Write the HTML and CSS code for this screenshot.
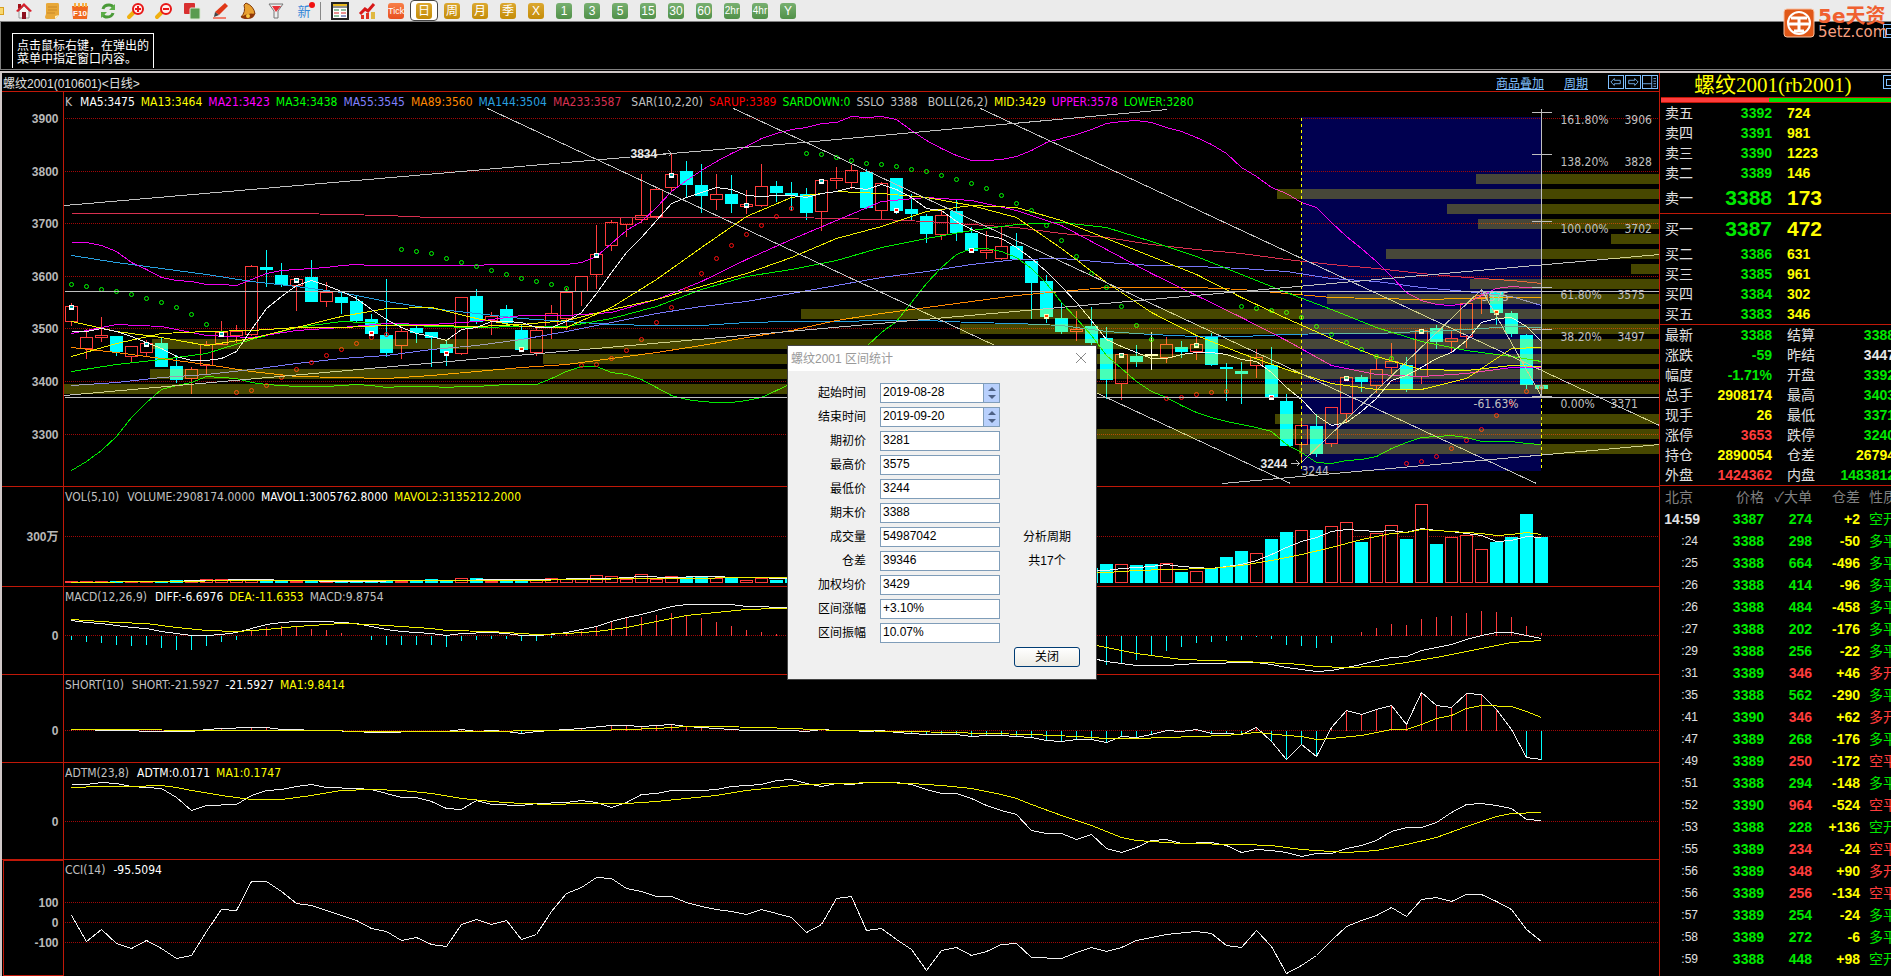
FILE: index.html
```html
<!DOCTYPE html>
<html lang="zh-CN">

<head>
    <meta charset="UTF-8">
    <meta name="viewport" content="width=device-width, initial-scale=1.0">
    <title>螺纹2001 日线</title>
    <link rel="stylesheet" href="styles.css">
</head>

<body>

    <div class="toolbar">
        <span class="cut"></span>
        <button class="tool" title="首页"><svg viewBox="0 0 16 16"><path d="M3 8v7h10V8L8 3z" fill="#f4f4f4" stroke="#999"/><path d="M0 8L8 0l8 8-2 1-6-6-6 6z" fill="#d8202c"/><path d="M2 1h3v3L2 6z" fill="#a01018"/><path d="M6 9h4v7H6z" fill="#8c1020"/></svg></button>
        <button class="tool" title="公告"><svg viewBox="0 0 16 16"><path d="M2 1q0-1 2-1h10q1 0 1 2v10l-4 4H3q-2 0-2-2l1-3z" fill="#e8a838"/><path d="M4 4h9M4 7h9M3 10h8" stroke="#c88828"/><path d="M11 16v-3l4-1z" fill="#fff0c0"/></svg></button>
        <button class="tool" title="F10"><svg viewBox="0 0 16 16"><path d="M0 3h16l-1 13H1z" fill="#f06820"/><path d="M3 0v4M7 0v4M11 0v4M14 0v4" stroke="#f8b040" stroke-width="2"/><text x="8" y="13" font-size="8" font-weight="bold" text-anchor="middle" fill="#fff">F10</text></svg></button>
        <button class="tool" title="刷新"><svg viewBox="0 0 16 16"><path d="M3 6q1-4 6-4 3 0 4 2M13 10q-1 4-6 4-3 0-4-2" fill="none" stroke="#4a9a38" stroke-width="3"/><path d="M15 1v6H9zM1 15V9h6z" fill="#5cae48"/></svg></button>
        <button class="tool" title="放大"><svg viewBox="0 0 16 16"><path d="M6 9l-5 5" stroke="#f0b010" stroke-width="4" stroke-linecap="round"/><circle cx="10" cy="6" r="5" fill="#fff0f0" stroke="#e81818" stroke-width="2"/><path d="M7 6h6M10 3v6" stroke="#e81818" stroke-width="2"/></svg></button>
        <button class="tool" title="缩小"><svg viewBox="0 0 16 16"><path d="M6 9l-5 5" stroke="#f0b010" stroke-width="4" stroke-linecap="round"/><circle cx="10" cy="6" r="5" fill="#fff0f0" stroke="#e81818" stroke-width="2"/><path d="M7 6h6" stroke="#e81818" stroke-width="2"/></svg></button>
        <button class="tool" title="叠加"><svg viewBox="0 0 16 16"><rect width="11" height="11" rx="1" fill="#d83030"/><rect x="6" y="5" width="10" height="11" rx="1" fill="#5a9c50" stroke="#d8e8d0"/></svg></button>
        <button class="tool" title="画线"><svg viewBox="0 0 16 16"><path d="M13 0l3 3-9 9-4-3z" fill="#e03818"/><path d="M3 9l4 3-5 2z" fill="#444"/><path d="M1 15h13" stroke="#f08070" stroke-width="2"/></svg></button>
        <button class="tool" title="预警"><svg viewBox="0 0 16 16"><path d="M6 0q8 3 9 11L1 14Q6 9 4 2z" fill="#e8a030" stroke="#803808"/><path d="M1 14q7-5 14-3-1 5-8 5-5 0-6-2z" fill="#903808"/><circle cx="8" cy="13" r="2" fill="#f8c840"/></svg></button>
        <button class="tool" title="筛选"><svg viewBox="0 0 16 16"><path d="M1 1h14l-5 7v7H6V8z" fill="#eee" stroke="#777"/><path d="M4 3h9L8 9z" fill="#e83038"/></svg></button>
        <button class="tool new" title="新">新<i></i></button>
        <span class="sep"></span>
        <button class="tool" title="报价"><svg viewBox="0 0 16 16"><rect x="0" y="0" width="16" height="16" fill="#fff" stroke="#222" stroke-width="2"/><path d="M1 2h14" stroke="#e8b820" stroke-width="2"/><path d="M0 4h16" stroke="#222"/><path d="M2 7h5M2 13h5M9 7h5" stroke="#208040"/><path d="M2 10h5M9 10h5" stroke="#d02020"/><path d="M9 13h5" stroke="#203890"/></svg></button>
        <button class="tool" title="走势"><svg viewBox="0 0 16 16"><path d="M1 16v-4h3v4zM6 16v-6h3v6z" fill="#e03020"/><path d="M11 16V9h4v7z" fill="#e0b840"/><path d="M0 11l5-5 3 2 6-7" fill="none" stroke="#d81818" stroke-width="3"/></svg></button>
        <button class="tool"><b class="tick">Tick</b></button>
        <button class="tool on"><b class="gold">日</b></button>
        <button class="tool"><b class="gold">周</b></button>
        <button class="tool"><b class="gold">月</b></button>
        <button class="tool"><b class="gold">季</b></button>
        <button class="tool"><b class="gold">X</b></button>
        <button class="tool"><b class="green">1</b></button>
        <button class="tool"><b class="green">3</b></button>
        <button class="tool"><b class="green">5</b></button>
        <button class="tool"><b class="green">15</b></button>
        <button class="tool"><b class="green">30</b></button>
        <button class="tool"><b class="green">60</b></button>
        <button class="tool"><b class="green small">2hr</b></button>
        <button class="tool"><b class="green small">4hr</b></button>
        <button class="tool"><b class="green">Y</b></button>
    </div>

    <div class="hint-bar">
        <p class="hint">点击鼠标右键，在弹出的<br>菜单中指定窗口内容。</p>
        <button class="corner" title="菜单"></button>
    </div>

    <div class="brand">
        <svg class="brand-mark" viewBox="0 0 32 30"><rect x="1" y="1" width="30" height="28" rx="3" fill="#e05818" stroke="#f8c0a0"/><circle cx="16" cy="15" r="11" fill="none" stroke="#fff" stroke-width="2"/><path d="M8 10h16M5 16h22M16 10v14M11 23h10" stroke="#fff" stroke-width="3" fill="none"/></svg>
        <div class="brand-text">
            <span class="brand-name">5e天资</span>
            <span class="brand-url">5etz.com</span>
        </div>
    </div>

    <div class="main">
        <div class="charts">
            <div class="chart-head">
                <span class="chart-title">螺纹2001(010601)&lt;日线&gt;</span>
                <a href="#">商品叠加</a>
                <a href="#">周期</a>
                <span class="boxes">
                    <button title="前移"><svg viewBox="0 0 16 14"><path d="M2 7l4-4v2h7v4H6v2z"/></svg></button>
                    <button title="后移"><svg viewBox="0 0 16 14"><path d="M14 7l-4-4v2H3v4h7v2z"/></svg></button>
                    <button title="布局"><svg viewBox="0 0 16 14"><path d="M10 0v14M0 9h10M12 3h3M12 6h3M12 9h3M12 12h3"/></svg></button>
                </span>
            </div>

            <div class="pane">
                <svg id="kline" viewBox="2 2 1657 394" preserveAspectRatio="xMinYMin meet"></svg>
                <div class="legend kline-legend">
                    <span>K</span>
                    <span class="white">MA5:3475</span>
                    <span class="yellow">MA13:3464</span>
                    <span class="magenta">MA21:3423</span>
                    <span class="lime">MA34:3438</span>
                    <span class="violet">MA55:3545</span>
                    <span class="orange">MA89:3560</span>
                    <span class="blue">MA144:3504</span>
                    <span class="crimson">MA233:3587</span>
                    <span class="group">SAR(10,2,20)</span>
                    <span class="red">SARUP:3389</span>
                    <span class="lime">SARDOWN:0</span>
                    <span>SSLO</span>
                    <span>3388</span>
                    <span class="group">BOLL(26,2)</span>
                    <span class="yellow">MID:3429</span>
                    <span class="magenta">UPPER:3578</span>
                    <span class="lime">LOWER:3280</span>
                </div>
            </div>

            <div class="pane">
                <svg id="vol" viewBox="2 7 1657 99" preserveAspectRatio="xMinYMin meet"></svg>
                <div class="legend">
                    <span>VOL(5,10)</span>
                    <span>VOLUME:2908174.0000</span>
                    <span class="white">MAVOL1:3005762.8000</span>
                    <span class="yellow">MAVOL2:3135212.2000</span>
                </div>
            </div>

            <div class="pane">
                <svg id="macd" viewBox="2 107 1657 87" preserveAspectRatio="xMinYMin meet"></svg>
                <div class="legend">
                    <span>MACD(12,26,9)</span>
                    <span class="white">DIFF:-6.6976</span>
                    <span class="yellow">DEA:-11.6353</span>
                    <span>MACD:9.8754</span>
                </div>
            </div>

            <div class="pane">
                <svg id="short" viewBox="2 195 1657 87" preserveAspectRatio="xMinYMin meet"></svg>
                <div class="legend">
                    <span>SHORT(10)</span>
                    <span>SHORT:-21.5927</span>
                    <span class="white">-21.5927</span>
                    <span class="yellow">MA1:9.8414</span>
                </div>
            </div>

            <div class="pane">
                <svg id="adtm" viewBox="2 283 1657 96" preserveAspectRatio="xMinYMin meet"></svg>
                <div class="legend">
                    <span>ADTM(23,8)</span>
                    <span class="white">ADTM:0.0171</span>
                    <span class="yellow">MA1:0.1747</span>
                </div>
            </div>

            <div class="pane">
                <svg id="cci" viewBox="2 380 1657 116" preserveAspectRatio="xMinYMin meet"></svg>
                <div class="legend">
                    <span>CCI(14)</span>
                    <span class="white">-95.5094</span>
                </div>
            </div>
        </div>

        <div class="side">
            <div class="side-head">
                <h1>螺纹2001(rb2001)</h1>
                <button class="corner" title="菜单"></button>
            </div>
            <div class="ratio"><i></i></div>

            <table class="book">
                <tr><th>卖五</th><td>3392</td><td>724</td></tr>
                <tr><th>卖四</th><td>3391</td><td>981</td></tr>
                <tr><th>卖三</th><td>3390</td><td>1223</td></tr>
                <tr><th>卖二</th><td>3389</td><td>146</td></tr>
                <tr class="big"><th>卖一</th><td>3388</td><td>173</td></tr>
            </table>
            <table class="book">
                <tr class="big"><th>买一</th><td>3387</td><td>472</td></tr>
                <tr><th>买二</th><td>3386</td><td>631</td></tr>
                <tr><th>买三</th><td>3385</td><td>961</td></tr>
                <tr><th>买四</th><td>3384</td><td>302</td></tr>
                <tr><th>买五</th><td>3383</td><td>346</td></tr>
            </table>

            <table class="info">
                <tr><th>最新</th><td>3388</td><th>结算</th><td>3388</td></tr>
                <tr><th>涨跌</th><td>-59</td><th>昨结</th><td class="pale">3447</td></tr>
                <tr><th>幅度</th><td>-1.71%</td><th>开盘</th><td>3392</td></tr>
                <tr><th>总手</th><td class="yellow">2908174</td><th>最高</th><td>3403</td></tr>
                <tr><th>现手</th><td class="yellow">26</td><th>最低</th><td>3371</td></tr>
                <tr><th>涨停</th><td class="up">3653</td><th>跌停</th><td>3240</td></tr>
                <tr><th>持仓</th><td class="yellow">2890054</td><th>仓差</th><td class="yellow">26794</td></tr>
                <tr><th>外盘</th><td class="up">1424362</td><th>内盘</th><td>1483812</td></tr>
            </table>

            <table class="ticks" id="ticks">
                <tr><th>北京</th><th>价格</th><th>✓大单</th><th>仓差</th><th>性质</th></tr>
            </table>
        </div>
    </div>

    <form class="dialog">
        <div class="dialog-title">
            <span>螺纹2001 区间统计</span>
            <button type="button" class="close" title="关闭"><svg viewBox="0 0 10 10"><path d="M0 0l10 10M10 0L0 10"/></svg></button>
        </div>
        <div class="dialog-body">
            <label for="from">起始时间</label>
            <div class="date">
                <input id="from" type="text" value="2019-08-28">
                <div class="spin"><button type="button" class="inc" title="加"></button><button type="button" class="dec" title="减"></button></div>
            </div>
            <label for="to">结束时间</label>
            <div class="date">
                <input id="to" type="text" value="2019-09-20">
                <div class="spin"><button type="button" class="inc" title="加"></button><button type="button" class="dec" title="减"></button></div>
            </div>
            <label for="open">期初价</label><input id="open" type="text" value="3281">
            <label for="high">最高价</label><input id="high" type="text" value="3575">
            <label for="low">最低价</label><input id="low" type="text" value="3244">
            <label for="last">期末价</label><input id="last" type="text" value="3388">
            <label for="volume">成交量</label><input id="volume" type="text" value="54987042">
            <span class="note">分析周期</span>
            <label for="diff">仓差</label><input id="diff" type="text" value="39346">
            <span class="note">共17个</span>
            <label for="avg">加权均价</label><input id="avg" type="text" value="3429">
            <label for="rise">区间涨幅</label><input id="rise" type="text" value="+3.10%">
            <label for="swing">区间振幅</label><input id="swing" type="text" value="10.07%">
            <button type="button" class="ok">关闭</button>
        </div>
    </form>

    <script src="chart.js"></script>
</body>

</html>
```

FILE: styles.css
```css
* {
    box-sizing: border-box;
}

body {
    margin: 0;
    height: 100vh;
    display: flex;
    flex-direction: column;
    overflow: hidden;
    position: relative;
    background: #000;
    color: #c0c0c0;
    font-family: "Liberation Sans", "Noto Sans CJK SC", sans-serif;
    font-size: 12px;
}

button {
    padding: 0;
    border: none;
    background: none;
    font-family: inherit;
    cursor: pointer;
}

/* 工具栏 */
.toolbar {
    flex: none;
    display: flex;
    align-items: center;
    height: 22px;
    background: #ebebeb;
    border-bottom: 1px solid #808080;
}

.cut {
    width: 4px;
    height: 8px;
    margin-right: 6px;
    background: #f8d870;
    border: 1px solid #d8a020;
    border-left: none;
}

.tool {
    flex: none;
    display: flex;
    align-items: center;
    justify-content: center;
    width: 28px;
    height: 21px;
    overflow: visible;
}

.tool svg {
    width: 16px;
    height: 16px;
    overflow: visible;
}

.tool b {
    width: 16px;
    height: 16px;
    line-height: 16px;
    border-radius: 3px;
    color: #fff;
    font-size: 12px;
    font-weight: normal;
    text-align: center;
    white-space: nowrap;
}

.tool .gold {
    background: linear-gradient(#dca830, #c48c08);
}

.tool .green {
    background: linear-gradient(#78b070, #509048);
}

.tool .tick {
    background: linear-gradient(#f88048, #e85020);
    font-size: 9px;
}

.tool .small {
    font-size: 10px;
}

.tool.on {
    background: #fff;
    border: 1px solid #444;
    border-radius: 4px;
}

.new {
    position: relative;
    color: #3888d8;
    font-size: 13px;
}

.new i {
    position: absolute;
    top: 2px;
    right: 3px;
    width: 6px;
    height: 6px;
    border-radius: 50%;
    background: #f01010;
}

.sep {
    width: 2px;
    height: 18px;
    margin: 0 4px 0 2px;
    border-left: 1px solid #888;
}

.hint-bar {
    flex: none;
    display: flex;
    justify-content: space-between;
    height: 48px;
    border-left: 1px solid #808080;
    border-bottom: 1px solid #808080;
}

.hint {
    width: 142px;
    height: 35px;
    margin: 11px 0 0 11px;
    padding: 6px 4px 0;
    border: 1px solid #fff;
    border-bottom: none;
    color: #fff;
    line-height: 13px;
    white-space: nowrap;
}

/* 窗格右上角的小方块 */
.corner {
    width: 8px;
    height: 14px;
    margin-top: 2px;
    border: 1px solid #80c0ff;
    border-right: none;
    background: linear-gradient(#80c0ff, #80c0ff) 3px 3px / 8px 1px no-repeat,
        linear-gradient(#80c0ff, #80c0ff) 3px 9px / 8px 1px no-repeat,
        linear-gradient(#80c0ff, #80c0ff) 2px 3px / 1px 7px no-repeat;
}

/* 右上角标志，盖在工具栏上 */
.brand {
    position: absolute;
    top: 8px;
    right: 4px;
    display: flex;
    gap: 3px;
}

.brand-mark {
    width: 32px;
    height: 30px;
}

.brand-text {
    display: flex;
    flex-direction: column;
    width: 69px;
    color: #f06030;
    font-family: "DejaVu Sans", "Noto Sans CJK SC", sans-serif;
    white-space: nowrap;
}

.brand-name {
    font-size: 20px;
    font-weight: bold;
    line-height: 17px;
}

.brand-url {
    color: #f8a080;
    font-size: 15px;
    line-height: 14px;
}

/* 主区域 */
.main {
    flex: 1;
    display: flex;
    min-height: 0;
    margin-top: 1px;
    border-top: 2px solid #d0c8c8;
    border-left: 2px solid #d0c8c8;
}

.charts {
    flex: 1;
    min-width: 0;
    display: grid;
    grid-template-rows: 19px 395fr 100fr 88fr 88fr 97fr 116fr;
}

.chart-head {
    display: flex;
    align-items: center;
    gap: 20px;
    padding-left: 1px;
    border-bottom: 1px solid #c01808;
}

.chart-title {
    flex: 1;
    color: #e0e0e0;
}

.chart-head a {
    color: #80c0ff;
}

.boxes {
    display: flex;
    gap: 1px;
    padding-right: 1px;
}

.boxes button {
    width: 16px;
    height: 14px;
    border: 1px solid #80c0ff;
}

.boxes svg {
    display: block;
    width: 100%;
    height: 100%;
    fill: none;
    stroke: #80c0ff;
}

.pane {
    position: relative;
    min-height: 0;
    overflow: hidden;
    border-bottom: 1px solid #c01808;
}

.pane:last-child {
    border-bottom: none;
}

.pane svg {
    display: block;
    width: 100%;
    height: 100%;
}

.legend {
    position: absolute;
    top: 2px;
    left: 63px;
    display: flex;
    gap: 6px;
    line-height: 16px;
    white-space: nowrap;
    font-family: "DejaVu Sans Condensed", "DejaVu Sans", sans-serif;
}

.legend span:first-child {
    margin-right: 2px;
}

.kline-legend .group {
    margin-left: 4px;
}

.white { color: #fff; }
.yellow { color: #ff0; }
.magenta { color: #f0f; }
.lime { color: #0f0; }
.violet { color: #8080ff; }
.orange { color: #f80; }
.blue { color: #28a0e0; }
.crimson { color: #d83050; }
.red { color: #f00; }

/* 图形 */
.line {
    fill: none;
    stroke-width: 1;
}

.line,
.crisp,
.grid,
.draw {
    shape-rendering: crispEdges;
}

.grid {
    stroke: #a00808;
    stroke-dasharray: 1 1;
}

.frame {
    fill: none;
    stroke: #c01808;
}

.draw {
    fill: none;
    stroke: #c0c0c0;
}

.axis {
    fill: #b8b8b8;
    font-size: 12px;
    font-weight: bold;
    text-anchor: end;
}

.mark {
    fill: #c0c0c0;
    font-family: "DejaVu Sans Condensed", "DejaVu Sans", sans-serif;
    font-size: 12px;
}

.mark.strong {
    fill: #e8e8e8;
    font-weight: bold;
    font-family: "Liberation Sans", sans-serif;
}

/* 右侧行情 */
.side {
    flex: none;
    width: 232px;
    overflow: hidden;
    border-left: 1px solid #c01808;
}

.side-head {
    display: flex;
    justify-content: space-between;
    height: 24px;
    padding-left: 34px;
}

.side h1 {
    margin: 0;
    color: #ff0;
    font-family: "Liberation Serif", "Noto Sans CJK SC", serif;
    font-size: 21px;
    font-weight: normal;
    line-height: 24px;
    white-space: nowrap;
}

.ratio {
    height: 6px;
    margin-left: 1px;
    background: #00e000;
    border-top: 1px solid #c01808;
    border-bottom: 1px solid #c01808;
}

.ratio i {
    display: block;
    width: 47%;
    height: 4px;
    background: #ff3c3c;
}

.side table {
    width: 235px;
    table-layout: fixed;
    border-collapse: collapse;
    border-bottom: 1px solid #c01808;
}

.side th,
.side td {
    height: 20px;
    padding: 0;
    font-size: 14px;
    line-height: 20px;
    white-space: nowrap;
}

.side th {
    padding-left: 5px;
    color: #e0e0e0;
    font-weight: normal;
    text-align: left;
}

.side td {
    color: #00e800;
    font-weight: bold;
    text-align: right;
}

.side .yellow { color: #ff0; }
.side .up { color: #ff3c3c; }
.side .pale { color: #e8e8e8; }

.book th {
    width: 48px;
}

.book td:nth-child(2) {
    width: 64px;
}

.side .book td:last-child {
    padding-left: 15px;
    color: #ff0;
    text-align: left;
}

.side .big th,
.side .big td {
    height: 30px;
    line-height: 30px;
}

.side .big td {
    font-size: 21px;
}

.info th:first-child {
    width: 48px;
}

.info td:nth-child(2) {
    width: 64px;
}

.side .info th:nth-child(3) {
    width: 60px;
    padding-left: 15px;
}

.side .ticks {
    border: none;
}

.side .ticks th,
.side .ticks td {
    height: 22px;
    line-height: 22px;
}

.side .ticks th {
    padding: 0;
    color: #808080;
    text-align: right;
}

.side .ticks th:first-child {
    width: 40px;
    padding-left: 5px;
    text-align: left;
}

.ticks th:nth-child(2) { width: 64px; }
.ticks th:nth-child(3) { width: 48px; }
.ticks th:nth-child(4) { width: 48px; }

.side .ticks th:last-child,
.side .ticks td:last-child {
    padding-left: 9px;
    font-weight: normal;
    text-align: left;
}

.side .ticks td:first-child {
    padding-right: 2px;
    color: #e0e0e0;
    font-size: 12px;
    font-weight: normal;
}

.side .ticks tr:nth-child(2) td:first-child {
    padding-right: 0;
    font-size: 14px;
    font-weight: bold;
}

/* 区间统计窗口 */
.dialog {
    position: absolute;
    top: 346px;
    left: 788px;
    width: 308px;
    background: #f0f0f0;
    box-shadow: 0 0 0 1px #444;
    color: #000;
}

.dialog-title {
    display: flex;
    align-items: center;
    justify-content: space-between;
    height: 25px;
    padding: 0 10px 2px 3px;
    background: #fff;
    color: #999;
}

.close svg {
    display: block;
    width: 10px;
    height: 10px;
    overflow: visible;
    stroke: #888;
}

.dialog-body {
    display: grid;
    grid-template-columns: 78px 120px 1fr;
    grid-auto-rows: 20px;
    gap: 4px 14px;
    align-items: center;
    padding: 12px 16px 12px 0;
}

.dialog-body label {
    grid-column: 1;
    text-align: right;
    line-height: 18px;
}

.dialog-body > input,
.date {
    grid-column: 2;
}

.dialog-body input {
    width: 100%;
    height: 20px;
    padding: 0 2px 2px;
    border: 1px solid #7f9db9;
    background: #fff;
    color: #000;
    font-family: inherit;
    font-size: 12px;
}

.date {
    display: flex;
}

.date input {
    flex: 1;
    min-width: 0;
}

.spin {
    display: flex;
    flex-direction: column;
    justify-content: center;
    align-items: center;
    gap: 4px;
    width: 16px;
    background: #b8d0fc;
    border: 1px solid #7f9db9;
    border-left: none;
}

.spin button {
    width: 0;
    height: 0;
    border: 4px solid transparent;
}

.spin .inc {
    border-top: none;
    border-bottom-color: #4d6185;
}

.spin .dec {
    border-bottom: none;
    border-top-color: #4d6185;
}

.note {
    grid-column: 3;
    text-align: center;
    line-height: 18px;
}

.ok {
    grid-column: 3;
    grid-row: 12;
    height: 20px;
    border: 1px solid #003c74;
    border-radius: 3px;
    background: linear-gradient(#fff, #ecebe5);
    color: #000;
    font-size: 12px;
    line-height: 18px;
}
```

FILE: chart.js
```js
// K线横坐标：第 i 根的中心
function X(i) {
    return 71 + 15 * i;
}

// "y y i:y y" -> [[i, y], ...]，i:y 表示跳到第 i 根
function parse(text, step) {
    let i = -step;
    return text.trim().split(/\s+/).map(token => {
        const part = token.split(':');
        i = part.length === 2 ? +part[0] : i + step;
        return [i, +part[part.length - 1]];
    });
}

function line(text, color, step = 1) {
    const points = parse(text, step).map(p => X(p[0]) + ',' + p[1]).join(' ');
    return `<polyline class="line" points="${points}" stroke="${color}"/>`;
}

function grid(ys) {
    return ys.map(y => `<path class="grid" d="M64 ${y}H1659"/>`).join('');
}

function axis(labels) {
    return labels.map(l => `<text class="axis" x="58" y="${l[0] + 4}">${l[1]}</text>`).join('');
}

function render(id, top, html, back = '') {
    document.getElementById(id).innerHTML =
        `${back}<g transform="translate(.5 .5)"><path class="frame crisp" d="M63 ${top}v420"/>${html}</g>`;
}

const UP = '#ff3c3c';
const DOWN = '#00ffff';

// 类型 开 收 高 低
const candles = `r216,231,212,235 r247,258,238,268 r245,247,226,251 c246,261,246,265 r256,266,255,272
r253,262,249,266 c253,276,246,276 c276,289,264,292 r279,288,276,303 r254,275,250,283
r242,254,230,254 r241,245,234,252 r176,244,174,245 c177,179,159,196 c185,194,172,196
r189,195,187,220 c187,211,169,211 r202,211,191,216 c207,212,202,223 c211,230,205,231
c229,243,223,245 c245,262,188,266 r241,255,238,268 c238,242,233,252 c242,247,242,276
c254,262,250,275 r207,263,206,264 c206,231,198,233 r226,230,221,244 c219,232,214,236
c240,259,233,260 r240,262,237,265 r223,237,214,248 r202,228,197,239 r186,201,186,215
r164,184,134,198 r132,155,129,160 r127,134,127,146 r125,129,83,132 r99,126,96,128
r84,97,63,101 c81,94,70,106 c95,105,73,122 r104,109,83,119 c104,113,84,122
r114,116,99,123 r96,115,73,116 c96,102,90,111 c103,105,91,120 c104,122,97,129
r90,121,88,140 r88,90,76,98 r80,92,74,98 c82,117,78,118 r93,120,91,128
c88,120,88,123 c119,123,103,129 c126,143,123,152 r125,144,120,149 c121,142,109,150
c143,160,136,162 r160,162,140,168 r156,168,136,169 c156,168,142,168 c171,192,170,228
c191,226,184,232 c228,241,212,243 r239,241,220,250 c236,252,216,262 c248,289,236,308
r264,293,262,309 c266,271,254,276 w264,265,241,279 r254,267,246,272 c257,261,250,267
r254,261,246,269 c246,274,242,275 c277,278,272,310 c281,283,271,313 r267,275,258,287
c275,307,256,307 c311,355,303,355 r335,354,330,372 c336,363,323,366 r317,353,317,356
r287,323,285,331 c287,291,284,301 r279,295,268,302 r271,277,252,283 c275,299,266,301
r240,286,238,293 c238,251,234,258 r248,251,240,261 r213,246,213,257 r205,207,199,223
c202,222,201,234 c223,243,220,246 c245,294,243,298 c295,298,295,298`.split(/\s+/).map(t => ({
    type: t[0],
    v: t.slice(1).split(',').map(Number)
}));

function drawCandles() {
    return candles.map((c, i) => {
        const [top, bottom, high, low] = c.v;
        const x = X(i);
        if (c.type === 'r') {
            return `<g fill="none" stroke="${UP}"><path d="M${x} ${high}V${top}M${x} ${bottom}V${low}"/>
                <rect x="${x - 6}" y="${top}" width="12" height="${bottom - top}"/></g>`;
        }
        const color = c.type === 'w' ? '#fff' : DOWN;
        return `<path d="M${x} ${high}V${low}M${x - 6} ${top}h12V${bottom}h-12z" fill="${color}" stroke="${color}"/>`;
    }).join('');
}

const sarGreen = parse(`194 196 199 201 204 208 212 217 224 234 243
22:159 161 163 168 172 176 180 184 188 191 194 198
49:63 64 67 70 73 74 76 79 81 85 89 93 98 105 113 120 135 150 166 183 197 216 235 249
78:216 218 220 222 227 236 244 252 259 266 268`, 1);
const sarRed = parse(`11:302 300 295 287 279 272 265 259 253 247 244
34:275 274 268 260 249 232 217 199 183 168 155 144 135 126 118
73:308 307 304 302 301 89:373 371 366 358 350 339 325 313 301 297`, 1);

function dots(list, color) {
    return list.map(p => `<circle cx="${X(p[0])}" cy="${p[1]}" r="2" fill="none" stroke="${color}"/>`).join('');
}

// 每五根一个标记
const flags = parse('216 253 243 189 242 262 258 164 84 114 90 119 159 225 264 254 306 287 240 221', 5);
const flagRed = [20, 25, 30, 55, 60, 65, 80, 95];

function drawFlags() {
    return flags.map(p => {
        const x = X(p[0]);
        const color = flagRed.includes(p[0]) ? '#f00' : '#0aa';
        return `<rect x="${x - 3}" y="${p[1] - 2}" width="5" height="5" fill="#fff"/>
            <rect x="${x - 2}" y="${p[1] - 1}" width="3" height="2" fill="${color}"/>`;
    }).join('');
}

// 成交量分布：纵坐标, 起点
const profile = [[84, 1476], [99, 1277], [114, 1447], [129, 1478], [144, 1611], [159, 1386], [174, 1631],
    [189, 1470], [204, 1327], [219, 801], [234, 960], [249, 152], [264, 543], [279, 150], [294, 64],
    [324, 1275], [339, 1090], [354, 1299]];

const fib = [[22, '161.80%', 3906, 1624], [64, '138.20%', 3828, 1624], [131, '100.00%', 3702, 1624],
    [197, '61.80%', 3575, 1617], [239, '38.20%', 3497, 1617], [306, '0.00%', 3371, 1610]];

const ma5 = `241 241 238 241 246 252 258 266 270 270 268 261 239 218 206 195 190 195 201 208 219 229 237 243
246 250 239 237 231 231 232 237 237 231 222 203 182 162 147 130 113 107 102 97 99 105 106 105
105 107 103 101 97 99 94 99 107 118 120 131 139 145 148 157 168 181 196 212 230 249 256 262
268 268 264 262 262 264 269 271 282 297 309 325 335 332 321 308 290 285 277 268 262 250 232 228
227 236 251`;
const upper = `152 152 155 161 172 179 187 190 191 194 194 195 189 183 180 179 178 177 175 174 175 175 175 175
175 175 175 175 174 174 174 174 174 174 172 166 153 140 131 117 101 90 80 71 63 56 48 43
39 37 33 32 26 27 26 29 40 50 58 65 70 70 69 66 60 52 48 44 39 33 31 30
32 37 41 47 54 63 77 86 97 103 112 117 132 146 158 171 186 202 210 214 215 213 205 198
196 197 197`;
const lower = `380 371 360 346 327 312 299 295 292 286 287 288 292 294 295 296 296 296 295 294 295 297 296 296
296 297 296 296 295 294 294 294 288 281 276 276 282 284 289 297 305 309 311 312 312 310 307 300
293 286 278 270 263 256 242 231 212 193 177 164 158 158 161 167 178 193 212 228 245 265 278 291
301 307 315 322 327 331 334 337 341 354 362 372 373 370 369 366 358 352 347 346 345 347 351 351
351 353 354`;

// 以下均线每三根取一点
const ma13 = '231 241 247 255 248 237 226 218 217 228 236 237 217 189 157 126 107 101 103 107 115 127 158 192 222 245 263 279 293 299 299 288 258 98:257';
const mid = '266 253 243 241 240 237 237 235 235 236 234 230 219 209 196 183 167 148 136 121 115 117 130 148 166 184 207 228 248 266 279 280 275 98:276';
const ma21 = '243 234 236 245 247 240 237 233 234 231 225 225 222 209 191 169 149 130 111 107 110 120 135 159 183 205 227 250 275 284 286 283 277 98:277';
const ma34 = '281 274 269 263 249 237 231 233 236 237 236 236 228 216 199 186 179 170 157 148 140 134 132 137 151 166 184 202 219 237 251 260 266 98:271';
const ma55 = '295 292 287 284 279 273 268 265 259 255 249 241 232 223 216 211 203 195 187 181 174 169 168 172 175 176 178 181 188 191 197 201 206 98:215';
const ma89 = '257 262 268 274 281 286 287 288 285 281 277 274 268 262 255 247 240 230 223 217 211 205 201 197 197 197 199 203 207 208 209 208 207 98:207';
const ma144 = '165 172 178 184 191 196 202 211 218 223 228 231 234 235 235 232 231 231 230 230 232 233 235 241 244 246 246 244 243 243 241 239 236 98:237';
const ma233 = '123 123 123 123 123 123 124 125 127 127 127 127 127 127 127 127 127 128 129 131 134 137 143 147 154 159 163 169 174 178 183 187 190 98:193';

render('kline', 0,
    grid([28, 81, 133, 186, 238, 291, 344]) +
    axis([[28, 3900], [81, 3800], [133, 3700], [186, 3600], [238, 3500], [291, 3400], [344, 3300]]) +
    `<g class="crisp">${drawCandles()}</g>` +
    line(ma233, '#d83050', 3) + line(ma144, '#28a0e0', 3) + line(ma89, '#ff8800', 3) +
    line(ma55, '#7878f8', 3) + line(ma34, '#00f000', 3) + line(ma21, '#f000f0', 3) +
    line(mid, '#f0f000', 3) + line(ma13, '#f0f000', 3) + line(ma5, '#f0f0f0') +
    line(upper, '#f000f0') + line(lower, '#00e800') +
    dots(sarGreen, '#00ff00') + dots(sarRed, '#ff1010') +
    `<g class="crisp">${drawFlags()}</g>` +
    `<path class="draw" d="M64 115L671 63L803 52L1167 19M64 305L1659 164M1222 393L1659 354
        M487 18L1290 393M733 18L1536 393M980 18L1659 335M1301 372L1481 199L1541 306"/>` +
    '<g fill="#ff0" fill-opacity=".28" transform="translate(-.5 -.5)">' +
    profile.map(p => `<rect x="${p[1]}" y="${p[0]}" width="${1659 - p[1]}" height="10"/>`).join('') +
    '</g>' +
    '<path class="draw" d="M64 201H1659M64 307H1659M1541 18V307"/>' +
    '<path d="M1301 27V378M1541 308V378" stroke="#ff0" stroke-dasharray="3 3" class="crisp"/>' +
    fib.map(f => `<path class="draw" d="M1531 ${f[0]}h20"/>
        <text class="mark" x="1560" y="${f[0] + 11}">${f[1]}</text>
        <text class="mark" x="${f[3]}" y="${f[0] + 11}">${f[2]}</text>`).join('') +
    '<text class="mark strong" x="630" y="67">3834</text><path class="draw" d="M662 63h9m-3-3l3 3l-3 3"/>' +
    '<text class="mark strong" x="1260" y="377">3244</text><path class="draw" d="M1290 373h9m-3-3l3 3l-3 3"/>' +
    '<text class="mark" x="1301" y="384">3244</text>' +
    '<text class="mark" x="1481" y="210">3575</text>' +
    '<text class="mark" x="1473" y="317">-61.63%</text>',
    '<path d="M1301 27h240v354h-240z" fill="#000050"/>');

const volTops = parse(`101 101 101 101 101 101 101 100 100 99 99 100 100 101 101 101 101 101 101 101 101 101 101 101
99 101 98 98 101 101 101 100 98 99 99 95 96 99 94 99 96 97 97 98 97 100 98 100
99 99 98 98 97 97 96 96 95 95 94 94 93 93 92 92 91 90 90 89 88 84 84 85
84 83 92 91 88 77 71 73 59 52 50 50 46 42 62 53 45 59 24 64 57 55 69 62
57 34 57`, 1);

render('vol', 0, grid([56]) + axis([[56, '300万']]) + '<g class="crisp">' +
    volTops.map(p => {
        const x = X(p[0]) - 6;
        const up = candles[p[0]].type === 'r';
        return `<rect x="${x}" y="${p[1]}" width="12" height="${102 - p[1]}" stroke="${up ? UP : DOWN}" fill="${up ? '#000' : DOWN}"/>`;
    }).join('') + '</g>' +
    line('102 6:101 12:99 18:101 24:100 30:99 36:98 38:96 40:97 42:96 48:98 69:90 88 87 86 84 86 87 88 86 84 80 74 67 61 57 51 49 50 51 50 52 48 50 51 53 55 61 60 56 57', '#f0f0f0') +
    line('102 12:100 30:100 38:98 48:97 69:92 71:90 73:89 76:88 78:85 80:80 82:74 84:67 86:59 88:53 52 49 92:51 94:53 55 54 52 54', '#f0f000'));

const macdBars = parse(`159 161 162 164 165 164 167 169 169 165 161 159 150 146 145 145 148 149 152 155 159 164 164 164
164 166 160 159 158 158 160 160 157 153 150 146 140 137 136 134 132 134 137 141 145 149 151 153
69:184 182 179 175 170 166 162 161 160 159 156 158 164 165 167 162 155 151 147 143 144 138 136 135 132 130 131 136 145 152`, 1);

function bars(list, zero) {
    return '<g class="crisp">' + list.map(p =>
        `<path d="M${X(p[0])} ${zero}V${p[1]}" stroke="${p[1] < zero ? UP : DOWN}"/>`).join('') + '</g>';
}

render('macd', 100, grid([155]) + axis([[155, 0]]) + bars(macdBars, 155) +
    line('140 142 143 145 147 148 151 153 155 155 154 152 148 144 142 141 17:141 142 143 146 149 151 152 153 155 153 28:152 153 155 155 154 152 149 146 141 137 134 130 126 124 124 124 124 126 48:127 54:135 64:165 69:181 183 185 73:185 75:183 79:182 184 187 189 191 190 187 184 180 177 176 170 167 164 159 155 152 152 155 158', '#f0f0f0') +
    line('139 3:142 5:143 7:147 9:150 11:151 13:149 15:146 18:143 20:144 22:146 24:148 150 28:151 31:154 33:153 35:151 37:147 39:141 41:135 43:132 45:129 47:128 48:128 58:135 69:167 71:173 74:179 78:181 81:183 184 186 85:187 87:186 89:182 91:177 93:171 95:165 162 98:160', '#f0f000'));

const shortLine = `249 3:250 6:251 8:251 249 248 12:247 247 249 17:250 19:251 252 252 23:251 25:251 249 251 250 251 253 251 250
34:248 36:245 245 246 245 244 246 247 45:250 47:250 250 251 249 250 250 251 250 252 253 254 254 254 256 255 255 256 257
260 261 259 259 262 256 257 254 250 251 249 253 253 254 247 261 279 264 276 247 230 234 229 225 244 212 225 227 213 214 229 249 277 279`;

render('short', 190, grid([250]) + axis([[250, 0]]) + bars(parse(shortLine, 1), 250) +
    line(shortLine, '#f0f0f0') +
    line('249 24:251 35:250 37:249 39:248 41:246 43:246 46:247 48:248 51:250 56:251 61:253 64:254 67:256 69:258 71:258 75:256 77:255 79:252 81:255 256 259 258 86:255 88:249 249 244 238 235 228 225 96:226 231 237', '#f0f000'));

render('adtm', 280, grid([341]) + axis([[341, 0]]) +
    line(`304 304 302 303 306 307 308 317 330 325 11:324 315 310 309 306 304 307 19:308 309 313 317 317 321 328 329 320 324
    30:325 323 33:322 320 322 327 322 314 313 310 42:310 309 306 46:304 300 299 303 306 303 304 302 55:302 304 309 313 313 318 325 330 334
    350 353 353 359 354 368 372 367 360 359 363 76:362 365 372 369 370 372 376 373 373 368 365 360 351 347 347 342 332 324 323 325 328 339 340`, '#f0f0f0') +
    line(`307 2:306 4:306 6:305 307 310 10:315 12:319 14:319 16:315 18:310 20:309 22:310 24:313 26:318 28:321 30:323 32:324 34:323
    37:323 39:321 41:318 43:315 45:310 47:307 305 304 51:303 54:302 56:303 58:305 60:308 62:314 318 324 66:335 68:345 70:357 360
    74:363 78:364 80:365 82:369 85:372 87:370 89:364 91:357 93:346 95:336 333 98:332`, '#f0f000'));

render('cci', 380, grid([422, 442, 462]) + axis([[422, 100], [442, 0], [462, -100]]) +
    '<path class="frame crisp" d="M3 380H63V495H3z"/>' +
    line(`435 461 449 463 468 460 468 478 475 451 429 430 401 401 411 423 425 18:435 440 448 451 460 457 464 466 444 439 444 440
    459 454 431 413 407 397 398 408 411 416 416 422 426 429 431 434 429 433 437 452 444 418 416 450 448 459 469 490 470 467 475 471
    464 463 477 66:478 472 467 471 467 460 457 454 75:451 453 465 467 450 466 493 485 475 460 446 440 435 427 436 419 417 421 414 414
    421 429 449 461`, '#f0f0f0'));

// 逐笔：时间 价格 手数 仓差 性质，手数带 * 为红色
const ticks = [
    ['14:59', 3387, '274', '+2', '空开'], [':24', 3388, '298', '-50', '多平'],
    [':25', 3388, '664', '-496', '多平'], [':26', 3388, '414', '-96', '多平'],
    [':26', 3388, '484', '-458', '多平'], [':27', 3388, '202', '-176', '多平'],
    [':29', 3388, '256', '-22', '多平'], [':31', 3389, '346*', '+46', '多开'],
    [':35', 3388, '562', '-290', '多平'], [':41', 3390, '346*', '+62', '多开'],
    [':47', 3389, '268', '-176', '多平'], [':49', 3389, '250*', '-172', '空平'],
    [':51', 3388, '294', '-148', '多平'], [':52', 3390, '964*', '-524', '空平'],
    [':53', 3388, '228', '+136', '空开'], [':55', 3389, '234*', '-24', '空平'],
    [':56', 3389, '348*', '+90', '多开'], [':56', 3389, '256*', '-134', '空平'],
    [':57', 3389, '254', '-24', '多平'], [':58', 3389, '272', '-6', '多平'],
    [':59', 3388, '448', '+98', '空开']
];

const table = document.getElementById('ticks');
ticks.forEach(t => {
    const row = document.createElement('tr');
    const cls = t[2].endsWith('*') ? 'up' : '';
    row.innerHTML = `<td>${t[0]}</td><td>${t[1]}</td><td class="${cls}">${t[2].replace('*', '')}</td>
        <td class="yellow">${t[3]}</td><td class="${cls}">${t[4]}</td>`;
    table.appendChild(row);
});
```
